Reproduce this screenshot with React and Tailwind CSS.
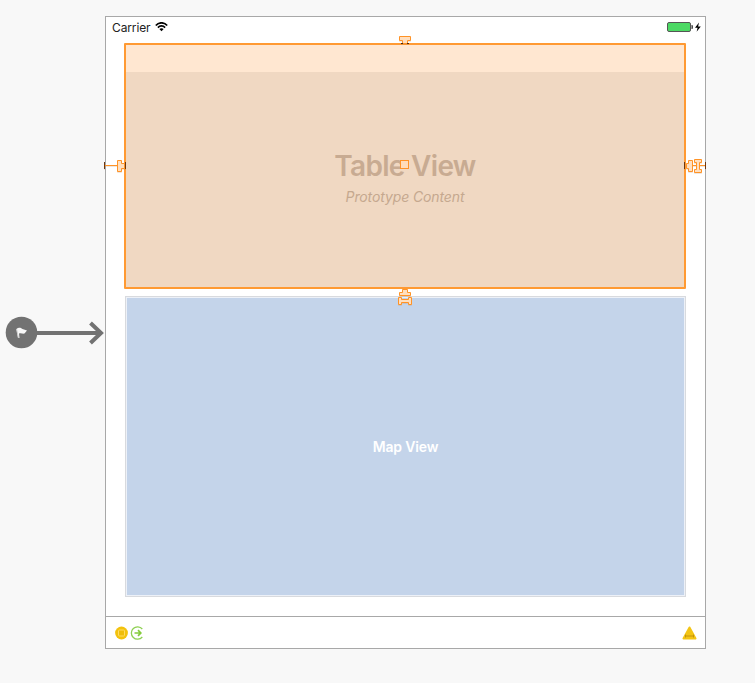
import React from "react";

function StatusBar() {
  return (
    <div className="flex h-[26px] items-start justify-between pl-[6px]">
      <div className="flex items-start">
        <span className="mt-[2px] w-[40px] whitespace-nowrap text-[12px] leading-[18px] tracking-[-0.12px] text-[#222]">Carrier</span>
        <svg className="mt-[5px] ml-[3px]" width="13" height="10" viewBox="0 0 13 10" fill="none" stroke="#000" strokeWidth="1.7">
          <path d="M.8 3.5C4-.1 9-.1 12.2 3.5M2.9 5.6c2-2.2 5.2-2.2 7.2 0" />
          <path d="M6.5 9.2 4.4 7.1c1.2-1.1 3-1.1 4.2 0z" fill="#000" stroke="none" />
        </svg>
      </div>
      <svg className="mt-[4px] mr-[3px]" width="35" height="12" viewBox="0 0 35 12">
        <rect x="0.5" y="1.5" width="23" height="9" rx="1.5" fill="#4cd964" stroke="#555" />
        <path d="M24.500 4h1q1 2 0 4h-1z" fill="#333" />
        <path d="m32 1.500-4 5.300h2.600l-1 4 4.200-5.400h-2.700z" fill="#000" />
      </svg>
    </div>
  );
}

function TableView() {
  return (
    <section className="relative ml-[18px] flex h-[246px] w-[562px] flex-col rounded-[1px] border-2 border-[#ff9a33] bg-[#f0d8c2]">
      <div className="h-[27px] bg-[#ffe7d1]" />
      <div className="flex flex-1 flex-col items-center pt-[76px]">
        <h1 className="whitespace-nowrap text-[28px] leading-[36px] font-semibold tracking-[-0.7px] text-[#c8ab92]">Table View</h1>
        <p className="mt-[4px] whitespace-nowrap text-[14px] leading-[18px] tracking-[-0.12px] text-[#c5a88f] italic">Prototype Content</p>
      </div>
      <div className="absolute top-[115px] left-[274px] h-[9px] w-[9px] border border-[#ff9326] bg-[#ffdcb9]" />
    </section>
  );
}

function MapView() {
  return (
    <section className="mt-[7px] ml-[19px] flex h-[301px] w-[561px] items-center justify-center border border-[#d8dade] bg-[#c4d4ea] shadow-[inset_0_0_0_1px_#edf1f8]">
      <span className="whitespace-nowrap text-[14px] leading-[18px] font-semibold tracking-[-0.18px] text-white">Map View</span>
    </section>
  );
}

function ConstraintMarks() {
  return (
    <svg className="pointer-events-none absolute top-0 left-0 drop-shadow-[0_1px_0_rgba(180,130,80,0.2)]" width="755" height="683" viewBox="0 0 755 683" fill="#ffdfbf" stroke="#ff9326" strokeWidth="1">
      <path d="M399.500 36.500h11v4h-3v3h-5v-3h-3z" />
      <path d="M401 43h2v1h-2zm6 0h2v1h-2z" fill="#4a2812" stroke="none" />
      <path d="M105 165.500h13" />
      <path d="M117.500 160.500h4v3h3v5h-3v3h-4z" />
      <path d="M104 162h1v7h-1zm21 0h1v7h-1z" fill="#6c3710" stroke="none" />
      <path d="M686 165.500h19" />
      <path d="M692.500 160.500h-4v3h-2v5h2v3h4z" />
      <path d="M694.500 159.500h7v3h-2v7h2v3h-7v-3h2v-7h-2z" />
      <path d="M684 162h1v7h-1zm21 0h1v7h-1z" fill="#6c3710" stroke="none" />
      <path d="M402.500 289.500h5v3h3v3h-11v-3h3z" />
      <path d="M398.500 297.500h3v2h7v-2h3v7h-3v-2h-7v2h-3z" />
    </svg>
  );
}

function EntryArrow() {
  return (
    <svg className="mt-[316px] ml-[5px] shrink-0" width="100" height="34" viewBox="0 0 100 34">
      <circle cx="16.500" cy="16.500" r="15.800" fill="#727272" />
      <path d="M31 17h65M85.500 7l10.500 10-10.500 10" fill="none" stroke="#727272" strokeWidth="4" />
      <path d="M11.500 13c3-2 4-1 6 0l4.500 1.500-2.500 3c-2 .5-3-.7-5.500 0l.5 4.500h-1.500z" fill="#f7f7f7" />
      <path d="m11.500 13 2 9" stroke="#ccc" />
    </svg>
  );
}

function SceneDock() {
  return (
    <footer className="flex h-[32px] items-center justify-between border-t border-[#a8a8a8] pr-[8px] pl-[8px]">
      <div className="flex gap-[2px]">
        <svg width="14" height="14" viewBox="0 0 14 14">
          <circle cx="7.500" cy="7" r="6.400" fill="#f3c20d" />
          <rect x="4.500" y="4" width="6" height="6" rx="1" fill="#efbd0b" stroke="#ffdc62" strokeWidth="1" />
        </svg>
        <svg width="14" height="14" viewBox="0 0 14 14" fill="none" stroke="#8ed052">
          <path d="M12.300 3A6.200 6.200 0 1 0 12.300 11" strokeWidth="1.300" />
          <path d="M4.500 7h6M8 4.200l2.800 2.800L8 9.800" stroke="#84cb3c" strokeWidth="1.700" />
        </svg>
      </div>
      <svg width="16" height="14" viewBox="0 0 16 14">
        <path d="M8.500 1.500 14.500 12.500h-12z" fill="#f3c414" stroke="#f3c414" strokeWidth="2" strokeLinejoin="round" />
        <path d="M4.500 8.500v3m8-3v3M4.500 10h8" stroke="#b88a0e" strokeWidth=".8" />
      </svg>
    </footer>
  );
}

export default function App() {
  return (
    <main className="relative flex h-[683px] w-[755px] items-start overflow-hidden bg-[#f8f8f8] font-['Inter','Liberation_Sans',sans-serif]">
      <EntryArrow />
      <div className="mt-[16px] flex h-[633px] w-[601px] shrink-0 flex-col border border-[#a8a8a8] bg-white">
        <div className="h-[599px]">
          <StatusBar />
          <TableView />
          <MapView />
        </div>
        <SceneDock />
      </div>
      <ConstraintMarks />
    </main>
  );
}
